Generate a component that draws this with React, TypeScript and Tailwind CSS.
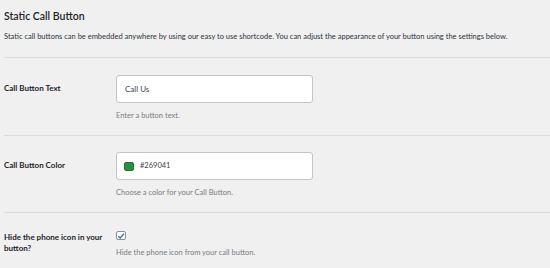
import React from 'react';

function Separador() {
  return <div className="h-px bg-[#dcdcde] w-full" />;
}

export default function App() {
  return (
    <div
      className="w-[550px] h-[268px] bg-[#f0f0f1] text-[#1d2327] overflow-hidden pl-[4px]"
      style={{ fontFamily: 'Lato, "Liberation Sans", sans-serif' }}
    >
      <h2 className="text-[10.5px] font-semibold leading-none pt-[11px]">Static Call Button</h2>
      <p className="text-[7.5px] leading-none mt-[11px] text-[#2c3338]">
        Static call buttons can be embedded anywhere by using our easy to use shortcode. You can adjust the appearance of your button using the settings below.
      </p>
      <div className="mt-[17px]">
        <Separador />
      </div>

      {/* Texto del botón */}
      <div className="flex h-[77px]">
        <div className="w-[112px] pt-[26px] text-[8px] font-bold leading-none">Call Button Text</div>
        <div className="pt-[17px]">
          <div className="w-[197px] h-[28px] bg-white border border-[#c3c4c7] rounded-[3px] flex items-center px-[8px] text-[8px] text-[#3c434a]">
            Call Us
          </div>
          <p className="text-[7.5px] text-[#787c82] mt-[9px] leading-none">Enter a button text.</p>
        </div>
      </div>
      <Separador />

      {/* Color del botón */}
      <div className="flex h-[76px]">
        <div className="w-[112px] pt-[25px] text-[8px] font-bold leading-none">Call Button Color</div>
        <div className="pt-[16px]">
          <div className="w-[197px] h-[28px] bg-white border border-[#c3c4c7] rounded-[3px] flex items-center pl-[7px] gap-[6px] text-[7.5px] text-[#3c434a]">
            <span className="w-[10px] h-[9px] bg-[#269041] border border-[#1e7434] rounded-[2px]" />
            <span>#269041</span>
          </div>
          <p className="text-[7.5px] text-[#787c82] mt-[9px] leading-none">Choose a color for your Call Button.</p>
        </div>
      </div>
      <Separador />

      {/* Ocultar icono */}
      <div className="flex">
        <div className="w-[112px] pt-[19px] text-[8px] font-bold leading-[11px]">
          Hide the phone icon in your
          <br />
          button?
        </div>
        <div className="pt-[18px]">
          <span className="w-[10px] h-[9px] bg-white border border-[#8c8f94] rounded-[2px] flex items-center justify-center">
            <svg viewBox="0 0 10 10" className="w-[8px] h-[8px]">
              <path d="M1.5 5.2 L4 7.6 L8.6 2.2" fill="none" stroke="#2271b1" strokeWidth="1.6" />
            </svg>
          </span>
          <p className="text-[7.5px] text-[#787c82] mt-[9px] leading-none">Hide the phone icon from your call button.</p>
        </div>
      </div>
    </div>
  );
}
